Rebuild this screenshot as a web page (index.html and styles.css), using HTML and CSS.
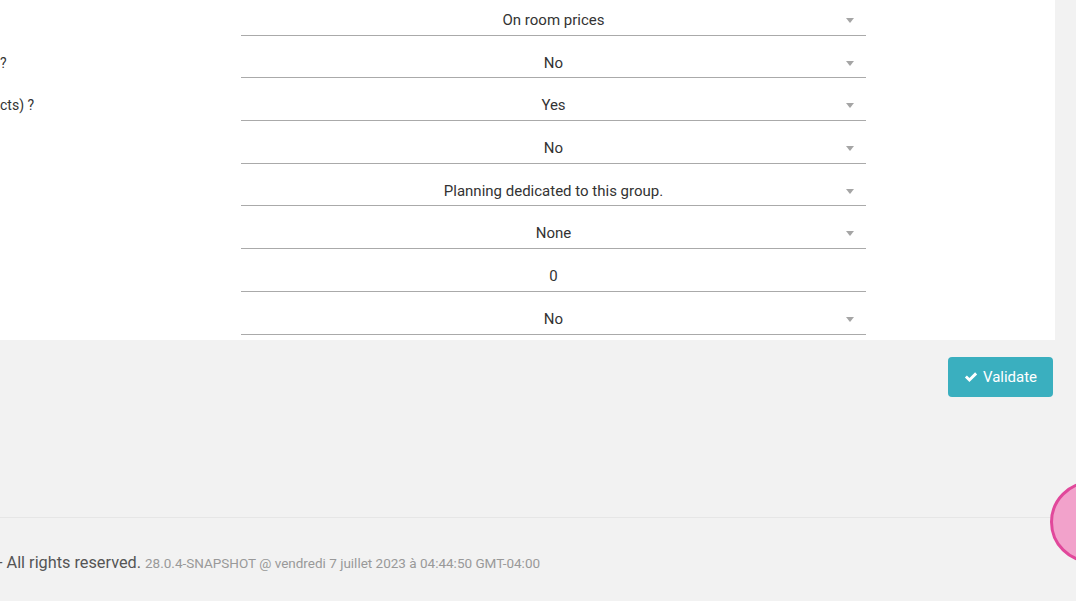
FILE: index.html
```html
<!DOCTYPE html>
<html lang="en">
<head>
  <meta charset="UTF-8" />
  <meta name="viewport" content="width=device-width, initial-scale=1.0"/>
  <title>Setup - Group</title>
  <link rel="stylesheet" href="styles.css">
</head>
<body>
  <section class="card">
    <div class="row">
      <div class="label"></div>
      <div class="field select">On room prices</div>
    </div>
    <div class="row">
      <div class="label">?</div>
      <div class="field select">No</div>
    </div>
    <div class="row">
      <div class="label">cts) ?</div>
      <div class="field select">Yes</div>
    </div>
    <div class="row">
      <div class="label"></div>
      <div class="field select">No</div>
    </div>
    <div class="row">
      <div class="label"></div>
      <div class="field select">Planning dedicated to this group.</div>
    </div>
    <div class="row">
      <div class="label"></div>
      <div class="field select">None</div>
    </div>
    <div class="row">
      <div class="label"></div>
      <div class="field">0</div>
    </div>
    <div class="row">
      <div class="label"></div>
      <div class="field select">No</div>
    </div>
  </section>

  <div class="actions">
    <button class="btn-validate">
      <svg viewBox="0 0 16 16" width="14" height="14"><path d="M1 8.6 L3.3 6.3 L6.2 9.2 L12.7 2.7 L15 5 L6.2 13.8 Z" fill="#fff"/></svg>
      Validate
    </button>
  </div>

  <footer>
    <span class="copy">- All rights reserved.</span>
    <span class="version">28.0.4-SNAPSHOT @ vendredi 7 juillet 2023 à 04:44:50 GMT-04:00</span>
  </footer>

  <div class="bubble"></div>
</body>
</html>
```

FILE: styles.css
```css
body, html {
  margin: 0;
  padding: 0;
  font-family: Roboto, "Liberation Sans", sans-serif;
  color: #333;
  background: #f2f2f2;
  height: 100%;
  overflow: hidden;
}

/* Form card */
.card {
  background: #fff;
  width: 1055px;
  margin-top: -7px;
  padding-bottom: 5px;
}

.row {
  display: flex;
  height: 42.7px;
  box-sizing: border-box;
}

.label {
  width: 241px;
  padding-top: 19px;
  font-size: 14px;
  line-height: 16px;
  white-space: nowrap;
}

.field {
  position: relative;
  width: 625px;
  box-sizing: border-box;
  border-bottom: 1px solid #aaa;
  padding-top: 18px;
  font-size: 15px;
  line-height: 18px;
  text-align: center;
}

.select::after {
  content: "";
  position: absolute;
  right: 12px;
  top: 25px;
  border-left: 4.5px solid transparent;
  border-right: 4.5px solid transparent;
  border-top: 5px solid #a5a5a5;
}

/* Actions */
.actions {
  display: flex;
  justify-content: flex-end;
  width: 1053px;
  padding-top: 17px;
}

.btn-validate {
  display: flex;
  align-items: center;
  gap: 5px;
  height: 40px;
  width: 105px;
  justify-content: center;
  background: #3aafbf;
  color: #fff;
  border: none;
  border-radius: 4px;
  font-family: Roboto, "Liberation Sans", sans-serif;
  font-size: 15px;
  padding: 1px 0 0 0;
}

/* Footer */
footer {
  margin-top: 120px;
  border-top: 1px solid #e6e6e6;
  padding-top: 35px;
  white-space: nowrap;
}

.copy {
  font-size: 16.3px;
  color: #555;
  margin-left: -2px;
}

.version {
  font-size: 13.5px;
  color: #999;
}

.bubble {
  position: absolute;
  left: 1050px;
  top: 481px;
  width: 76px;
  height: 76px;
  border-radius: 50%;
  background: #f2a2cb;
  border: 3px solid #e1489b;
}
```
